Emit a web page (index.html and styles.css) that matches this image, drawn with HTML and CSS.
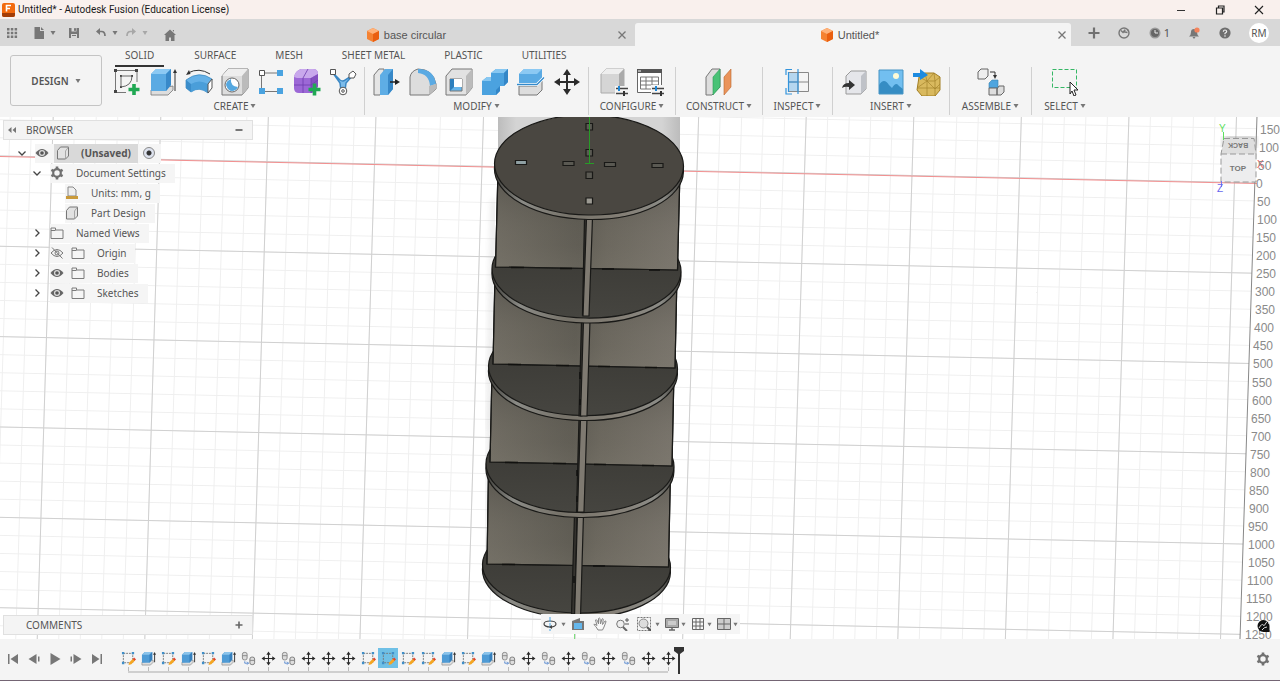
FILE: index.html
```html
<!DOCTYPE html>
<html lang="en">
<head>
<meta charset="utf-8">
<title>Untitled* - Autodesk Fusion (Education License)</title>
<link rel="stylesheet" href="styles.css">
</head>
<body>
<svg class="defs" width="0" height="0" aria-hidden="true">
  <symbol id="cube" viewBox="0 0 14 14"><path d="M7 0l6 3v8l-6 3-6-3V3z" fill="#f58232"/><path d="M7 0l6 3-6 3-6-3z" fill="#ffb27a"/><path d="M7 6l6-3v8l-6 3z" fill="#ea5f10"/></symbol>
  <symbol id="close" viewBox="0 0 12 12"><path d="M2.500 2.500l7 7M9.500 2.500l-7 7" stroke="#777" stroke-width="1.300" fill="none"/></symbol>
  <symbol id="caret" viewBox="0 0 6 6"><path d="M.5 1h5L3 5z" fill="#777"/></symbol>
  <symbol id="move" viewBox="0 0 28 28"><path d="M14 5v18M5 14h18" stroke="#2b2b2b" stroke-width="2"/><path d="M14 1l4 6h-8zM14 27l4-6h-8zM1 14l6-4v8zM27 14l-6-4v8z" fill="#2b2b2b"/></symbol>
  <symbol id="box" viewBox="0 0 14 14"><path d="M1.500 4.500l3-3.500h8v9l-3 3h-8z" fill="#e2e2e2" stroke="#777"/><path d="M9.500 13V5l3-4" fill="none" stroke="#999" stroke-width=".8"/></symbol>
  <symbol id="folder" viewBox="0 0 14 14"><path d="M1 2h4.500v2H13v8.500H1zM1 4.500h4.500" fill="none" stroke="#7b7b7b"/></symbol>
  <symbol id="eye" viewBox="0 0 14 14"><path d="M.5 7Q7-1 13.500 7 7 15 .5 7z" fill="#666"/><circle cx="7" cy="7" r="3" fill="#ddd"/><circle cx="7" cy="7" r="1.800" fill="#555"/></symbol>
  <symbol id="eyeoff" viewBox="0 0 14 14"><path d="M1 7Q7 0 13 7 7 14 1 7zM2 1.500l10.500 11" fill="none" stroke="#777"/><circle cx="7" cy="7" r="2" fill="none" stroke="#777"/></symbol>
  <symbol id="right" viewBox="0 0 14 14"><path d="M5.500 3.500L9 7l-3.500 3.500" fill="none" stroke="#444" stroke-width="1.300"/></symbol>
  <symbol id="down" viewBox="0 0 14 14"><path d="M3.500 5.500L7 9l3.500-3.500" fill="none" stroke="#444" stroke-width="1.300"/></symbol>
  <symbol id="gear" viewBox="0 0 14 14"><circle cx="7" cy="7" r="3.800" fill="none" stroke="#707070" stroke-width="2.200"/><path d="M7 .5v2.500M7 11v2.500M1.400 3.800l2 1.100M10.600 9.100l2 1.100M1.400 10.200l2-1.100M10.600 4.900l2-1.100" stroke="#707070" stroke-width="2.600"/></symbol>
  <symbol id="t-sketch" viewBox="0 0 16 16"><path d="M2.500 2.500h10v10h-10z" fill="none" stroke="#777" stroke-dasharray="2 1"/><path d="M1 1h2.500v2.500H1zM11.500 1H14v2.500h-2.500zM1 11.500h2.500V14H1z" fill="#3f8fc9"/><path d="M8 15l1-3 4-4 2 2-4 4z" fill="#f5a623"/><path d="M12.500 8.500l1.500-1.500 2 2-1.500 1.500z" fill="#e0442d"/></symbol>
  <symbol id="t-extrude" viewBox="0 0 16 16"><path d="M1 12v3h9l3-3v-2z" fill="#ddd" stroke="#888" stroke-width=".7"/><path d="M1 4l3-3h8v8l-3 3.500H1z" fill="#4f9bd5"/><path d="M1 4l3-3h8L9 4z" fill="#8bc3ea"/><path d="M9 4l3-3v8l-3 3.500z" fill="#3680bd"/><path d="M14.500 3v9" stroke="#333"/><path d="M12.800 4l1.700-3 1.500 3z" fill="#333"/></symbol>
  <symbol id="t-copy" viewBox="0 0 16 16"><rect x="1.500" y="1.500" width="5" height="8" rx="2" fill="#ddd" stroke="#888"/><rect x="9.500" y="6.500" width="5" height="8" rx="2" fill="#ddd" stroke="#777"/><path d="M1.500 5h5M9.500 10h5" stroke="#888"/><path d="M4 11v2h4M6.500 11.500L8 13l-1.500 1.500" stroke="#5a8bd0" fill="none"/></symbol>
</svg>

<header class="titlebar">
  <svg class="logo" viewBox="0 0 13 14"><rect width="13" height="14" rx="2" fill="#f2690d"/><path d="M0 10h13v2a2 2 0 0 1-2 2H2a2 2 0 0 1-2-2z" fill="#a33c05"/><path d="M4.500 8.500v-6h4.500M4.500 5.500h3.500" stroke="#fff" stroke-width="1.600" fill="none"/></svg>
  <h1 class="title">Untitled* - Autodesk Fusion (Education License)</h1>
  <div class="window-buttons">
    <button aria-label="Minimize"><svg viewBox="0 0 12 12"><path d="M2 6.500h8" stroke="#333"/></svg></button>
    <button aria-label="Restore"><svg viewBox="0 0 12 12"><path d="M2.500 4h6v6h-6zM4.500 4V2h5.500v6H8.500" fill="none" stroke="#222" stroke-width="1.200"/></svg></button>
    <button aria-label="Close"><svg viewBox="0 0 12 12"><path d="M2 2l8 8M10 2l-8 8" stroke="#222" stroke-width="1.100"/></svg></button>
  </div>
</header>

<nav class="tabbar">
  <div class="quick">
    <button class="q-grid" aria-label="Data panel"><svg viewBox="0 0 12 12"><path d="M1 1h2.500v2.500H1zM4.800 1h2.500v2.500H4.800zM8.600 1h2.500v2.500H8.600zM1 4.800h2.500v2.500H1zM4.800 4.800h2.500v2.500H4.800zM8.600 4.800h2.500v2.500H8.600zM1 8.600h2.500v2.500H1zM4.800 8.600h2.500v2.500H4.800zM8.600 8.600h2.500v2.500H8.600z" fill="#777"/></svg></button>
    <button class="q-file" aria-label="File"><svg viewBox="0 0 12 12"><path d="M1.500 0H7v4h4v8H1.500zM8 0l3 3H8z" fill="#777"/></svg><svg class="caret"><use href="#caret"/></svg></button>
    <button class="q-save" aria-label="Save"><svg viewBox="0 0 12 12"><path d="M1 1h10v10H1z" fill="#777"/><path d="M3.500 1h5v3.500h-5zM3 7h6v4H3z" fill="#d8d8d8"/><path d="M6.500 1.500h1v2h-1zM4 8.500h4" stroke="#777" fill="#777"/></svg></button>
    <button class="q-undo" aria-label="Undo"><svg viewBox="0 0 12 12"><path d="M3 4.500h3.500Q10 4.500 10 9" fill="none" stroke="#777" stroke-width="1.700"/><path d="M1 4.500L5 1v7z" fill="#777"/></svg><svg class="caret"><use href="#caret"/></svg></button>
    <button class="q-redo" aria-label="Redo"><svg viewBox="0 0 12 12"><path d="M9 4.500H5.500Q2 4.500 2 9" fill="none" stroke="#777" stroke-width="1.700"/><path d="M11 4.500L7 1v7z" fill="#777"/></svg><svg class="caret"><use href="#caret"/></svg></button>
    <button class="q-home" aria-label="Home"><svg viewBox="0 0 12 12"><path d="M6 .5l6 5.500h-1.500v6H7V8.500H5V12H1.500V6H0zM8.500 1H10v2z" fill="#777"/></svg></button>
  </div>
  <div class="tab tab-first">
    <span class="tab-title"><svg class="i14"><use href="#cube"/></svg>base circular</span>
    <button class="tab-close" aria-label="Close base circular"><svg class="i12"><use href="#close"/></svg></button>
  </div>
  <div class="tab tab-active">
    <span class="tab-title"><svg class="i14"><use href="#cube"/></svg>Untitled*</span>
    <button class="tab-close" aria-label="Close Untitled"><svg class="i12"><use href="#close"/></svg></button>
  </div>
  <div class="account">
    <button aria-label="New design"><svg viewBox="0 0 12 12"><path d="M6 .5v11M.5 6h11" stroke="#707070" stroke-width="2.200"/></svg></button>
    <button aria-label="Extensions"><svg viewBox="0 0 12 12"><circle cx="6" cy="6" r="5" fill="none" stroke="#777" stroke-width="1.400"/><path d="M3 3.500l2 2 1.500-2M7 2.500L6.500 5l3 .5M9 2.500l1.500 1" stroke="#777" stroke-width="1.400" fill="none"/></svg></button>
    <button class="jobs" aria-label="Job status"><svg viewBox="0 0 12 12"><circle cx="6" cy="6" r="5.500" fill="#999"/><circle cx="6" cy="6" r="4" fill="#666"/><path d="M6 3v3h3" stroke="#eee" fill="none"/></svg>1</button>
    <button aria-label="Notifications"><svg viewBox="0 0 12 12"><path d="M1 9.500Q3 8 3 5t3-3 3 3 2 4.500zM4.500 10h3L6 12z" fill="#777"/><circle cx="9" cy="3" r="2.600" fill="#f5835b"/></svg></button>
    <button aria-label="Help"><svg viewBox="0 0 12 12"><circle cx="6" cy="6" r="5.600" fill="#6e6e6e"/><path d="M4.300 4.700Q4.500 3 6 3t1.700 1.500Q7.700 5.500 6 6.300v.9" stroke="#eee" stroke-width="1.200" fill="none"/><circle cx="6" cy="9" r=".8" fill="#eee"/></svg></button>
    <button class="avatar">RM</button>
  </div>
</nav>

<section class="ribbon">
  <button class="workspace">DESIGN <svg class="caret"><use href="#caret"/></svg></button>
  <div class="ribbon-main">
    <div class="ribbon-tabs">
      <button class="current">SOLID</button><button>SURFACE</button><button>MESH</button><button>SHEET METAL</button><button>PLASTIC</button><button>UTILITIES</button>
    </div>
    <div class="groups">
      <div class="group group-create">
        <div class="tools">
          <button aria-label="Create sketch"><svg viewBox="0 0 28 28"><path d="M2 2.500h22M2.500 2v22M24 2v12M2 24.500h11" stroke="#777" fill="none"/><path d="M1 1h3v3H1zM22 1h3v3h-3zM1 22h3v3H1zM7 7h2v2H7zM7 18h2v2H7zM18 7h2v2h-2z" fill="#444"/><path d="M8 8h11Q19 18 8 19z" fill="none" stroke="#666"/><path d="M21 16v11M15.500 21.500h11" stroke="#20a853" stroke-width="3.600"/></svg></button>
          <button aria-label="Extrude"><svg viewBox="0 0 28 28"><path d="M2 22v5h17l5-5v-4z" fill="#ddd" stroke="#777" stroke-width=".8"/><path d="M2 6l5-5h15v16l-5 6H2z" fill="#5aaae3"/><path d="M2 6l5-5h15l-5 5z" fill="#8cc9f3"/><path d="M17 6l5-5v16l-5 6z" fill="#3889c9"/><path d="M26 3v20" stroke="#333"/><path d="M24 5l2-4 2 4z" fill="#333"/></svg></button>
          <button aria-label="Revolve"><svg viewBox="0 0 28 28"><path d="M1 12Q14 2 27 11l-4 14Q14 18 6 24L1 20z" fill="#65b1e7" stroke="#3785bd" stroke-width=".7"/><path d="M1 12l5 4v8l-5-4z" fill="#3b8dca"/><path d="M6 16Q14 11 23 16v9Q14 18 6 24z" fill="#4a9ed9"/><path d="M23 16l4-5v9l-4 5z" fill="#fff" stroke="#555"/><path d="M3 5Q14-1 25 6" fill="none" stroke="#333"/><path d="M1 7l3-5 1.500 4z" fill="#333"/></svg></button>
          <button aria-label="Hole"><svg viewBox="0 0 28 28"><path d="M1 8l6-7h20v19l-6 7H1z" fill="#ddd" stroke="#777"/><path d="M1 8l6-7h20l-6 7z" fill="#eee"/><path d="M21 8l6-7v19l-6 7z" fill="#bbb"/><circle cx="11" cy="17" r="7" fill="#fff" stroke="#666"/><path d="M10 11Q9 18 17 19 15 23 11 23T5 17q0-4 5-6z" fill="#55a8e0"/></svg></button>
          <button aria-label="Pattern"><svg viewBox="0 0 28 28"><path d="M5 5h19M4.500 6v17M4 23.500h20" stroke="#777"/><path d="M2.500 2.500h5v5h-5z" fill="#fff" stroke="#555"/><path d="M20 2h6v6h-6zM2 20h6v6H2zM20 20h6v6h-6z" fill="#4aa3e0"/></svg></button>
          <button aria-label="Create form"><svg viewBox="0 0 28 28"><path d="M1 9q1-6 7-8h12q5 0 5 5v12q-2 6-7 7H6q-5 0-5-5z" fill="#9c68d6"/><path d="M1 9q1-6 7-8h12q5 0 5 5l-7 4H4z" fill="#c8a8ec"/><path d="M18 10l7-4v12q-2 6-7 7z" fill="#8450c0"/><path d="M1 17h17l7-5M10 25V10l5-9M18 25V10" stroke="#6f3eae" stroke-width=".8" fill="none"/><path d="M21.500 15.500v12M15.500 21.500h12" stroke="#20a853" stroke-width="3.600"/></svg></button>
          <button aria-label="Automated modeling"><svg viewBox="0 0 28 28"><path d="M4 5l7 7q3 2 5 0l8-5-7 8-1 8h-4l-1-8z" fill="#7dbcea" stroke="#3a87c4" stroke-width="1.500"/><path d="M1.500 1.500h5v5h-5z" fill="#fff" stroke="#555"/><path d="M20 6l4-3 3 3-2 4h-5z" fill="#fff" stroke="#555"/><circle cx="14" cy="23" r="3.800" fill="#fff" stroke="#555"/><circle cx="14" cy="23" r="1.300" fill="none" stroke="#555"/></svg></button>
        </div>
        <button class="group-label">CREATE<svg class="caret"><use href="#caret"/></svg></button>
      </div>
      <div class="group">
        <div class="tools">
          <button aria-label="Press pull"><svg viewBox="0 0 28 28"><path d="M1 7l5-6h5v20l-4 6H1z" fill="#e5e5e5" stroke="#777"/><path d="M7 7l5-6h8v20l-5 6H7z" fill="#5eade5"/><path d="M15 7l5-6v20l-5 6z" fill="#3788c8"/><path d="M17 14h7" stroke="#222" stroke-width="1.500"/><path d="M22 11l5 3-5 3z" fill="#222"/></svg></button>
          <button aria-label="Fillet"><svg viewBox="0 0 28 28"><path d="M1 9q1-6 8-8 15 0 18 15v5l-7 6H1z" fill="#ddd" stroke="#777"/><path d="M9 1q16 0 18 15l-6 2Q20 6 9 5z" fill="#5aaae3"/><path d="M20 18l7-2v5l-7 6z" fill="#bbb"/></svg></button>
          <button aria-label="Shell"><svg viewBox="0 0 28 28"><path d="M1 8l6-7h20v19l-6 7H1z" fill="#e2e2e2" stroke="#777"/><path d="M21 8l6-7v19l-6 7z" fill="#bbb"/><path d="M5 11h12v12H5z" fill="#67b5ea" stroke="#777"/><path d="M5 11h4v8l-4 4z" fill="#2d7fbd"/><path d="M9 11h8v8H9z" fill="#fff"/></svg></button>
          <button aria-label="Combine"><svg viewBox="0 0 28 28"><path d="M1 13l5-4h4V5l5-4h12v13l-4 4h-4v5l-4 4H1z" fill="#4ba2df"/><path d="M10 5l5-4h12l-4 4zM1 13l5-4h4v4z" fill="#87c7f1"/><path d="M23 5l4-4v13l-4 4zM15 22l4-4v5l-4 4z" fill="#3386c7"/></svg></button>
          <button aria-label="Split body"><svg viewBox="0 0 28 28"><path d="M2 6l5-5h18v10l-5 4H2z" fill="#5aaae3"/><path d="M2 6l5-5h18l-5 5z" fill="#8cc9f3"/><path d="M2 18h18l5-5v9l-5 5H2z" fill="#ddd" stroke="#777"/><path d="M0 16.500h20l7-7" stroke="#fff" stroke-width="3" fill="none"/><path d="M0 16.500h20l7-7" stroke="#348acb" stroke-width="1.300" fill="none"/></svg></button>
          <button aria-label="Move"><svg><use href="#move"/></svg></button>
        </div>
        <button class="group-label">MODIFY<svg class="caret"><use href="#caret"/></svg></button>
      </div>
      <div class="group">
        <div class="tools">
          <button aria-label="Configure design"><svg viewBox="0 0 28 28"><path d="M1 6l5-5h18v19l-5 5H1z" fill="#d5d5d5" stroke="#aaa"/><path d="M1 6l5-5h18l-5 5z" fill="#eee"/><path d="M19 6l5-5v18l-5 6z" fill="#aaa"/><path d="M15 18h13v10H15z" fill="#f4f4f4"/><path d="M16 20.500h12M16 25.500h12" stroke="#444" stroke-width="1.500"/><path d="M19 18v5" stroke="#1e88d8" stroke-width="2"/><path d="M24 23v5" stroke="#333" stroke-width="2"/></svg></button>
          <button aria-label="Configuration table"><svg viewBox="0 0 28 28"><path d="M1.500 1.500h24v23h-24z" fill="#fff" stroke="#666"/><path d="M1 1h25v4H1z" fill="#555"/><path d="M2 3h3" stroke="#fff"/><path d="M4.500 9h18v12h-18zM4 13h18M4 17h18M10 9v12M16 9v12" fill="none" stroke="#777"/><path d="M15 17h12v10H15z" fill="#f5f5f5"/><path d="M16 20.500h12M16 25.500h12" stroke="#444" stroke-width="1.500"/><path d="M20 18v5" stroke="#1e88d8" stroke-width="2"/><path d="M25 23v5" stroke="#333" stroke-width="2"/></svg></button>
        </div>
        <button class="group-label">CONFIGURE<svg class="caret"><use href="#caret"/></svg></button>
      </div>
      <div class="group">
        <div class="tools">
          <button aria-label="Offset plane"><svg viewBox="0 0 28 28"><path d="M1 9l6-8h8v18l-8 8H1z" fill="#ddd" stroke="#777"/><path d="M8 9l7-8v18l-7 8z" fill="#49c276" stroke="#2e9a57" stroke-width=".6"/><path d="M19 9l7-8v18l-7 8z" fill="#ea945b" stroke="#b8652d" stroke-width=".6"/></svg></button>
        </div>
        <button class="group-label">CONSTRUCT<svg class="caret"><use href="#caret"/></svg></button>
      </div>
      <div class="group">
        <div class="tools">
          <button aria-label="Measure"><svg viewBox="0 0 28 28"><path d="M4 4h10v19H4z" fill="#b5d6ef"/><path d="M4.500 4.500h20v19h-20zM4 14h20M14 4v20" fill="none" stroke="#888"/><path d="M2 7V1.500h6M2 20v6h6M14 1v25M4.500 4v20M4 14h10" fill="none" stroke="#3394dc" stroke-width="1.200"/></svg></button>
        </div>
        <button class="group-label">INSPECT<svg class="caret"><use href="#caret"/></svg></button>
      </div>
      <div class="group">
        <div class="tools">
          <button aria-label="Insert derive"><svg viewBox="0 0 28 28"><path d="M5 8l5-5h15v18l-5 5H5z" fill="#e5e6ea" stroke="#999"/><path d="M20 8l5-5v18l-5 5z" fill="#bfc2c8"/><path d="M1 20q1-5 7-5v-3l6 5-6 5v-3q-4-1-7 1z" fill="#333"/></svg></button>
          <button aria-label="Insert image"><svg viewBox="0 0 28 28"><path d="M2 2h24v24H2z" fill="#72bff0"/><path d="M2 17q5-8 10 0l3 3q4-7 7-2l4 3v5H2z" fill="#368dc4"/><circle cx="19" cy="8" r="3" fill="#fffbd6"/><path d="M2 2h24v24H2z" fill="none" stroke="#4794c4"/></svg></button>
          <button aria-label="Insert mesh"><svg viewBox="0 0 28 28"><path d="M6 9l6-4h9l6 4v13l-5 6H9l-5-6z" fill="#d9b95e" stroke="#a27e22"/><path d="M6 9l8 4h8l5-4M14 13v15M4 20l10-7 8 8 5-5M22 13v15M4 20h23M12 5l2 8 7-8 1 8" fill="none" stroke="#a5842c" stroke-width=".7"/><path d="M0 5h7V1l8 6-8 5V9H0z" fill="#1d8be0"/></svg></button>
        </div>
        <button class="group-label">INSERT<svg class="caret"><use href="#caret"/></svg></button>
      </div>
      <div class="group">
        <div class="tools">
          <button aria-label="New component"><svg viewBox="0 0 28 28"><path d="M1 4l3-3h7v7l-3 3H1z" fill="#eee" stroke="#666"/><path d="M13 4h5v4" fill="none" stroke="#333"/><path d="M16 7h4l-2 4z" fill="#333"/><path d="M12 15l3-3h6v8h-9z" fill="#4fa5df" stroke="#377fae" stroke-width=".6"/><path d="M12 20h8v7h-8zM20 21l2-3h5v6l-3 3h-4z" fill="#ddd" stroke="#666"/></svg></button>
        </div>
        <button class="group-label">ASSEMBLE<svg class="caret"><use href="#caret"/></svg></button>
      </div>
      <div class="group group-last">
        <div class="tools">
          <button aria-label="Select"><svg viewBox="0 0 28 28"><path d="M1.500 1.500h24v18h-24z" fill="none" stroke="#35b765" stroke-dasharray="4 2"/><path d="M19 14l8 8h-4l2 5-2 1-2-5-2 3z" fill="#fff" stroke="#222"/></svg></button>
        </div>
        <button class="group-label">SELECT<svg class="caret"><use href="#caret"/></svg></button>
      </div>
    </div>
  </div>
</section>

<main class="viewport">
  <svg class="scene" viewBox="0 117 1280 522" preserveAspectRatio="xMidYMid slice">
    <defs>
      <pattern id="minor" width="21.500" height="18.060" patternUnits="userSpaceOnUse" patternTransform="matrix(1 .0215 -.0306 1 51.500 156.500)"><path d="M0 .5h21.500M.5 0v18.060" stroke="#efefef"/></pattern>
      <pattern id="major" width="107.500" height="90.300" patternUnits="userSpaceOnUse" patternTransform="matrix(1 .0215 -.0306 1 51.500 156.500)"><path d="M0 .5h107.500M.5 0v90.300" stroke="#d0d0d0"/></pattern>
      <linearGradient id="wallL"><stop offset="0" stop-color="#6d6960"/><stop offset=".45" stop-color="#5a574f"/><stop offset=".6" stop-color="#67635a"/><stop offset="1" stop-color="#77726a"/></linearGradient>
      <linearGradient id="shade" x2="0" y2="1"><stop offset="0" stop-color="#33322e" stop-opacity=".4"/><stop offset=".75" stop-color="#888478" stop-opacity=".15"/><stop offset="1" stop-color="#888478" stop-opacity=".3"/></linearGradient>
      <linearGradient id="rim"><stop offset="0" stop-color="#42413d"/><stop offset=".15" stop-color="#8b8b86"/><stop offset=".4" stop-color="#77736a"/><stop offset=".7" stop-color="#858077"/><stop offset=".9" stop-color="#8b8b86"/><stop offset="1" stop-color="#42413d"/></linearGradient>
      <linearGradient id="disc" x2="0" y2="1"><stop offset="0" stop-color="#373632"/><stop offset="1" stop-color="#464540"/></linearGradient>
      <linearGradient id="backdrop"><stop offset="0" stop-color="#bcbcbc"/><stop offset=".1" stop-color="#d4d4d4"/><stop offset=".9" stop-color="#d4d4d4"/><stop offset="1" stop-color="#bcbcbc"/></linearGradient>
      <filter id="soft"><feGaussianBlur stdDeviation="3"/></filter>
    </defs>
    <path d="M0 116h1257l-17 523H0z" fill="url(#minor)"/>
    <path d="M0 116h1257l-17 523H0z" fill="url(#major)"/>
    <path d="M0 156.500L1257 183.500" stroke="#f29090"/>
    <path d="M1257 116l-17 523" stroke="#888"/>
    <path d="M574.500 632v7" stroke="#7ee07e"/>
    <path d="M498 116h182v60H498z" fill="url(#backdrop)"/>
    <path d="M494 200l-5 230M491 400l-5 180" stroke="#999" stroke-width="4" opacity=".3" filter="url(#soft)"/>

    <g stroke="#191917" stroke-width="1.200">
      <g transform="rotate(1 576.500 566)"><ellipse cx="576.500" cy="571" rx="94" ry="47" fill="url(#rim)"/><ellipse cx="576.500" cy="566" rx="94" ry="47" fill="url(#disc)"/></g>
      <path d="M488.500 470L487 564l181.500 3 2-97z" fill="url(#wallL)"/><path d="M488.500 470L487 564l181.500 3 2-97z" fill="url(#shade)"/>
      <path d="M574.500 514l-3 100h3.500l2-100z" fill="#35332f"/><path d="M577.500 514l-3 103h6l3-103z" fill="#7f7a71"/>

      <g transform="rotate(1 580 465)"><ellipse cx="580" cy="470" rx="94" ry="47.500" fill="url(#rim)"/><ellipse cx="580" cy="465" rx="94" ry="47.500" fill="url(#disc)"/></g>
      <path d="M492 372l-2 90 182 4 2-94z" fill="url(#wallL)"/><path d="M492 372l-2 90 182 4 2-94z" fill="url(#shade)"/>
      <path d="M579 418l-2.500 94h3l2-94z" fill="#35332f"/><path d="M580.500 418l-3 94h6.500l3-94z" fill="#7f7a71"/>

      <g transform="rotate(1 583 368)"><ellipse cx="583" cy="372.500" rx="94.500" ry="48" fill="url(#rim)"/><ellipse cx="583" cy="367.500" rx="94.500" ry="48" fill="url(#disc)"/></g>
      <path d="M495 275l-2 89 182 4 2-93z" fill="url(#wallL)"/><path d="M495 275l-2 89 182 4 2-93z" fill="url(#shade)"/>
      <path d="M581.500 320l-2.500 96h3l2-96z" fill="#35332f"/><path d="M583.500 320l-3 96h6.500l3-96z" fill="#7f7a71"/>

      <g transform="rotate(1 586.500 271)"><ellipse cx="586.500" cy="275" rx="94.500" ry="48" fill="url(#rim)"/><ellipse cx="586.500" cy="270" rx="94.500" ry="48" fill="url(#disc)"/></g>
      <path d="M498 170l-2.500 97 182 3 2.500-100z" fill="url(#wallL)"/><path d="M498 170l-2.500 97 182 3 2.500-100z" fill="url(#shade)"/>
      <path d="M584.500 218l-2 97h3l2-97z" fill="#35332f"/><path d="M586.500 218l-3.500 98h6l3.500-98z" fill="#7f7a71"/>

      <g transform="rotate(1 589 166)"><ellipse cx="589" cy="170" rx="94.500" ry="49.500" fill="url(#rim)"/><ellipse cx="589" cy="165" rx="94.500" ry="50" fill="#4a4741"/></g>
      <path d="M586 123.500h6.500v6.500H586zM586 149.500h6.500v6.500H586zM586 172h6.500v6.500H586zM563 161.500h11v4h-11zM604.500 162.500h11v4h-11zM652 163.500h11v4h-11z" fill="#5a5952"/>
      <path d="M586 198h6.500v6H586z" fill="#9c9a92"/><path d="M515.500 160.500h11v4h-11z" fill="#8fa0a3"/>
    </g>
    <path d="M511 267.500h13M560 268.500h12M602 269h12M649 270h11M508 364.500h13M556 365.500h13M598 366.500h12M645 367.500h12M505 462.500h13M553 463.500h13M594 464.500h12M642 465.500h12M502 564.500h13M593 566h12M580 372v7M580 399v6M577 470v6M577 496v6M574 576v7" stroke="#11110f" stroke-width="1.500"/>
    <path d="M589.500 116v47M585 163.500h9" stroke="#279c27"/>

    <path d="M1224 137h31v10h-31z" fill="#777" opacity=".6" filter="url(#soft)"/>
    <path d="M1224 138h30l2 16h-35z" fill="#dedede"/><path d="M1221 154h35v28h-35z" fill="#ededee"/>
    <path d="M1224 138.500h30l2 15.500v28h-35v-28zM1221 154h35" fill="none" stroke="#999" stroke-dasharray="6 3"/>
    <text class="face" x="1238" y="171">TOP</text>
    <text class="face face-back" transform="rotate(180 1238 145)" x="1238" y="147">BACK</text>
    <path d="M1223.500 132v8" stroke="#5ee05e"/><path d="M1221.500 181v6" stroke="#7777ef"/>
    <text class="axis axis-y" x="1219" y="132">Y</text><text class="axis axis-z" x="1217" y="192">Z</text><text class="axis axis-x" x="1257" y="168">X</text>
    <g class="ruler">
      <text x="1260" y="134">150</text><text x="1259" y="152">100</text><text x="1258" y="170">50</text><text x="1256" y="188">0</text><text x="1257" y="206">50</text><text x="1257" y="224">100</text><text x="1256" y="242">150</text><text x="1256" y="260">200</text><text x="1256" y="278">250</text><text x="1255" y="296">300</text><text x="1255" y="314">350</text><text x="1254" y="332">400</text><text x="1253" y="350">450</text><text x="1253" y="368">500</text><text x="1252" y="387">550</text><text x="1252" y="405">600</text><text x="1251" y="423">650</text><text x="1251" y="441">700</text><text x="1250" y="459">750</text><text x="1250" y="477">800</text><text x="1249" y="495">850</text><text x="1249" y="513">900</text><text x="1248" y="531">950</text><text x="1248" y="549">1000</text><text x="1248" y="567">1050</text><text x="1247" y="585">1100</text><text x="1246" y="603">1150</text><text x="1246" y="621">1200</text><text x="1245" y="639">1250</text>
    </g>
    <path d="M1257.500 626a6 6 0 0 1 12 0v6h-6a6 6 0 0 1-6-6z" fill="#111"/><path d="M1259 628q3-5 4-3t3-2 3 1M1262 630q2-3 5-3" stroke="#ddd" fill="none"/>
  </svg>

  <aside class="browser">
    <div class="panel-head"><button aria-label="Collapse panel"><svg class="i12" viewBox="0 0 12 12"><path d="M5.500 3v6L2 6zM10 3v6L6.500 6z" fill="#777"/></svg></button><h2>BROWSER</h2><button aria-label="Minimize panel"><svg class="i12" viewBox="0 0 12 12"><path d="M2.500 6h7" stroke="#777" stroke-width="2"/></svg></button></div>
    <ul class="tree">
      <li class="row level0"><svg class="i14"><use href="#down"/></svg><span class="item root"><svg class="i14"><use href="#eye"/></svg><span class="selected"><svg class="i14"><use href="#box"/></svg><b>(Unsaved)</b></span><input type="radio" checked aria-label="Activate component"></span></li>
      <li class="row level1"><svg class="i14"><use href="#down"/></svg><span class="item"><svg class="i14"><use href="#gear"/></svg><span>Document Settings</span></span></li>
      <li class="row level2"><span class="item"><svg class="i14" viewBox="0 0 14 14"><path d="M3 1h5l3 3v6H3z" fill="#eee" stroke="#888"/><path d="M1 10h12v3H1z" fill="#c99a3b"/></svg><span>Units: mm, g</span></span></li>
      <li class="row level2"><span class="item"><svg class="i14"><use href="#box"/></svg><span>Part Design</span></span></li>
      <li class="row level1"><svg class="i14"><use href="#right"/></svg><span class="item"><svg class="i14"><use href="#folder"/></svg><span>Named Views</span></span></li>
      <li class="row level1"><svg class="i14"><use href="#right"/></svg><span class="item"><svg class="i14 vis"><use href="#eyeoff"/></svg><svg class="i14"><use href="#folder"/></svg><span>Origin</span></span></li>
      <li class="row level1"><svg class="i14"><use href="#right"/></svg><span class="item"><svg class="i14 vis"><use href="#eye"/></svg><svg class="i14"><use href="#folder"/></svg><span>Bodies</span></span></li>
      <li class="row level1"><svg class="i14"><use href="#right"/></svg><span class="item"><svg class="i14 vis"><use href="#eye"/></svg><svg class="i14"><use href="#folder"/></svg><span>Sketches</span></span></li>
    </ul>
  </aside>

  <section class="comments panel-head"><h2>COMMENTS</h2><button aria-label="Expand comments"><svg class="i12" viewBox="0 0 12 12"><path d="M6 2.500v7M2.500 6h7" stroke="#666" stroke-width="1.600"/></svg></button></section>

  <div class="navbar">
    <button aria-label="Orbit"><svg viewBox="0 0 14 14"><ellipse cx="7" cy="7" rx="6" ry="3" fill="none" stroke="#444" stroke-width="1.200"/><path d="M7 0v14" stroke="#4aa3e0" stroke-dasharray="5 1"/><path d="M9 8l-3 2 3 2z" fill="#444"/></svg></button><svg class="caret gap"><use href="#caret"/></svg>
    <button aria-label="Look at"><svg viewBox="0 0 14 14"><path d="M1 4l8-3v3h4v9H1z" fill="#777"/><path d="M3 6h8v6H3z" fill="#65b7ec"/></svg></button>
    <button class="wide" aria-label="Pan"><svg viewBox="0 0 14 14"><path d="M5 13Q3 9 .8 7.500q1-1 3.200 1L2.500 3q1-1 2 1l1 3V1.500q1-1 1.500 0L7.500 7l1.500-5q1-.8 1.300.3L9.500 7.500 12 4q1.500-.3.900 1L11 10l-1.500 3z" fill="#f8f8f8" stroke="#888"/></svg></button>
    <button class="wide" aria-label="Zoom"><svg viewBox="0 0 14 14"><circle cx="5.500" cy="7" r="3.800" fill="#eee" stroke="#777"/><path d="M8 10l4 4" stroke="#666" stroke-width="2"/><path d="M10 3h4M12 1v4M10 7h4" stroke="#555"/></svg></button>
    <button class="wide" aria-label="Fit"><svg viewBox="0 0 14 14"><path d="M.5.500h13v13H.5z" fill="none" stroke="#777" stroke-dasharray="2 1"/><circle cx="6.500" cy="6.500" r="4.500" fill="#ddd" stroke="#888"/><path d="M10 10l4 4" stroke="#555" stroke-width="2"/></svg></button><svg class="caret gap"><use href="#caret"/></svg>
    <button aria-label="Display settings"><svg viewBox="0 0 14 14"><path d="M.5 1.500h13v9H.5z" fill="#aaa" stroke="#666"/><path d="M3 4h8v4H3z" fill="#ccc"/><path d="M4 13h6M7 10v3" stroke="#666" stroke-width="1.500"/></svg></button><svg class="caret"><use href="#caret"/></svg>
    <button aria-label="Grid settings"><svg viewBox="0 0 14 14"><path d="M1.500 1.500h11v11h-11zM1.500 5h11M1.500 9h11M5 1.500v11M9 1.500v11" fill="none" stroke="#666"/></svg></button><svg class="caret"><use href="#caret"/></svg>
    <button aria-label="Viewports"><svg viewBox="0 0 14 14"><path d="M.5 1.500h13v11H.5z" fill="#ccc" stroke="#666"/><path d="M7 1.500v11M.5 7h13" stroke="#666"/></svg></button><svg class="caret"><use href="#caret"/></svg>
  </div>
</main>

<footer class="timeline">
  <div class="playback">
    <button aria-label="Go to start"><svg viewBox="0 0 12 12"><path d="M1 1h1.500v10H1zM11 1v10L3.500 6z" fill="#777"/></svg></button>
    <button aria-label="Step back"><svg viewBox="0 0 12 12"><path d="M8.500 1v10L.5 6zM10 3.500h1.500v5H10z" fill="#777"/></svg></button>
    <button aria-label="Play"><svg viewBox="0 0 12 12"><path d="M1.500 0v12L11.500 6z" fill="#777"/></svg></button>
    <button aria-label="Step forward"><svg viewBox="0 0 12 12"><path d="M3.500 1v10l8-5zM.5 3.500H2v5H.5z" fill="#777"/></svg></button>
    <button aria-label="Go to end"><svg viewBox="0 0 12 12"><path d="M9.500 1H11v10H9.500zM1 1v10l7.500-5z" fill="#777"/></svg></button>
  </div>
  <div class="features">
    <button aria-label="Sketch"><svg><use href="#t-sketch"/></svg></button>
    <button aria-label="Extrude"><svg><use href="#t-extrude"/></svg></button>
    <button aria-label="Sketch"><svg><use href="#t-sketch"/></svg></button>
    <button aria-label="Extrude"><svg><use href="#t-extrude"/></svg></button>
    <button aria-label="Sketch"><svg><use href="#t-sketch"/></svg></button>
    <button aria-label="Extrude"><svg><use href="#t-extrude"/></svg></button>
    <button aria-label="Copy"><svg><use href="#t-copy"/></svg></button>
    <button aria-label="Move"><svg><use href="#move"/></svg></button>
    <button aria-label="Copy"><svg><use href="#t-copy"/></svg></button>
    <button aria-label="Move"><svg><use href="#move"/></svg></button>
    <button aria-label="Move"><svg><use href="#move"/></svg></button>
    <button aria-label="Move"><svg><use href="#move"/></svg></button>
    <button aria-label="Sketch"><svg><use href="#t-sketch"/></svg></button>
    <button class="picked" aria-label="Sketch"><svg><use href="#t-sketch"/></svg></button>
    <button aria-label="Sketch"><svg><use href="#t-sketch"/></svg></button>
    <button aria-label="Sketch"><svg><use href="#t-sketch"/></svg></button>
    <button aria-label="Extrude"><svg><use href="#t-extrude"/></svg></button>
    <button aria-label="Sketch"><svg><use href="#t-sketch"/></svg></button>
    <button aria-label="Extrude"><svg><use href="#t-extrude"/></svg></button>
    <button aria-label="Copy"><svg><use href="#t-copy"/></svg></button>
    <button aria-label="Move"><svg><use href="#move"/></svg></button>
    <button aria-label="Copy"><svg><use href="#t-copy"/></svg></button>
    <button aria-label="Move"><svg><use href="#move"/></svg></button>
    <button aria-label="Copy"><svg><use href="#t-copy"/></svg></button>
    <button aria-label="Move"><svg><use href="#move"/></svg></button>
    <button aria-label="Copy"><svg><use href="#t-copy"/></svg></button>
    <button aria-label="Move"><svg><use href="#move"/></svg></button>
    <button aria-label="Move"><svg><use href="#move"/></svg></button>
    <svg class="marker" viewBox="0 0 10 28"><path d="M0 1h10v4L6 8v20H4V8L0 5z" fill="#333"/></svg>
  </div>
  <button class="settings" aria-label="Timeline settings"><svg class="i14"><use href="#gear"/></svg></button>
</footer>
</body>
</html>
```
FILE: styles.css
```css
* { box-sizing: border-box; }
body {
  margin: 0;
  min-height: 100vh;
  display: flex;
  flex-direction: column;
  font: 11px/16px "Noto Sans", "Open Sans", sans-serif;
  color: #555;
  background: #f4f4f4;
  overflow: hidden;
}
button {
  margin: 0;
  padding: 0;
  border: 0;
  background: none;
  font: inherit;
  color: inherit;
  display: flex;
  align-items: center;
  justify-content: center;
}
svg { display: block; flex: none; }
h1, h2 { margin: 0; font-size: inherit; font-weight: 400; }
.defs { position: absolute; }
.i12 { width: 12px; height: 12px; }
.i14 { width: 14px; height: 14px; }
.caret { width: 6px; height: 6px; }

.titlebar {
  height: 19px;
  display: flex;
  align-items: center;
  background: #f9f0ed;
  padding-left: 2px;
}
.logo { width: 13px; height: 14px; }
.title { flex: 1; margin-left: 3px; font-family: Roboto, sans-serif; font-size: 10px; color: #1a1a1a; }
.window-buttons { display: flex; padding-right: 2px; }
.window-buttons button { width: 39px; }
.window-buttons svg { width: 12px; height: 12px; }

.tabbar { height: 27px; display: flex; background: #d8d8d8; }
.quick { width: 188px; display: flex; align-items: center; padding-left: 6px; }
.quick svg { width: 12px; height: 12px; }
.quick .caret { width: 6px; height: 6px; margin-left: 5px; }
.q-grid, .q-save { margin-right: 15px; }
.q-file { margin-right: 12px; }
.q-undo { margin-right: 7px; }
.q-redo { opacity: .5; margin-right: 16px; }
.q-home { padding-top: 5px; }
.tab { flex: 438; display: flex; align-items: center; font-family: "Liberation Sans", sans-serif; padding: 4px 7px 0 0; }
.tab-first { flex: 445; }
.tab-active { background: #f4f4f4; margin-top: 4px; padding: 0 3px 0 0; border-radius: 3px 3px 0 0; }
.tab-title { flex: 1; display: flex; align-items: center; justify-content: center; gap: 4px; padding-left: 8px; }
.account { width: 209px; display: flex; align-items: center; justify-content: space-between; padding: 0 11px 0 17px; }
.account svg { width: 12px; height: 12px; }
.jobs { gap: 3px; }
.avatar { width: 20px; height: 20px; border-radius: 50%; background: #fff; font-size: 10px; }

.ribbon { display: flex; height: 71px; background: #f4f4f4; font-size: 10px; }
.workspace {
  width: 92px;
  margin: 9px 8px 11px 10px;
  border: 1px solid #c4c4c4;
  border-radius: 3px;
  gap: 6px;
  font-weight: 600;
}
.ribbon-main { flex: 1; }
.ribbon-tabs { display: flex; gap: 29px; padding-left: 5px; }
.ribbon-tabs button { height: 21px; padding: 0 5px 1px; border-bottom: 2px solid transparent; }
.ribbon-tabs .current { padding: 0 10px 1px; border-color: #333; margin-right: -4px; }
.groups { display: grid; grid-template-columns: 255px 224px 87px 87px 70px 117px 82px 66px; height: 43px; }
.group { border-right: 1px solid #d0d0d0; display: flex; flex-direction: column; align-items: center; }
.group-create { padding-right: 4px; }
.group-last { border: 0; }
.tools { display: flex; }
.tools button { width: 36px; height: 30px; }
.tools svg { width: 28px; height: 28px; }
.group-label { height: 18px; gap: 2px; white-space: nowrap; }

.viewport { position: relative; flex: 1; background: #fff; overflow: hidden; }
.scene { position: absolute; width: 100%; height: 100%; }
.ruler { font: 12px "Liberation Sans", sans-serif; fill: #8a8a8a; }
.face { font: 700 8px "Liberation Sans", sans-serif; fill: #777; text-anchor: middle; }
.face-back { font-size: 7px; }
.axis { font: 10px "Liberation Sans", sans-serif; }
.axis-x { fill: #e55; }
.axis-y { fill: #5ee05e; }
.axis-z { fill: #66e; }

.browser { position: absolute; left: 3px; top: 3px; width: 250px; }
.panel-head {
  height: 20px;
  display: flex;
  align-items: center;
  padding: 0 7px 0 2px;
  background: #f4f4f4;
  border: 1px solid #e0e0e0;
  font-size: 10px;
}
.panel-head h2 { flex: 1; margin-left: 8px; }
.comments { position: absolute; left: 3px; bottom: 4px; width: 250px; padding-left: 14px; }
.tree { list-style: none; margin: 3px 0 0; padding: 0; font-size: 10px; }
.row { height: 20px; display: flex; align-items: center; gap: 6px; }
.level0 { padding-left: 12px; }
.level1 { padding-left: 27px; }
.level2 { padding-left: 62px; }
.item { height: 19px; display: flex; align-items: center; gap: 12px; padding-right: 9px; background: #f5f5f5; }
.vis { margin-right: -5px; }
.root { gap: 5px; padding-right: 6px; }
.selected { height: 19px; display: flex; align-items: center; gap: 11px; padding: 0 7px 0 2px; background: #d9d9d9; }
.root input {
  appearance: none;
  width: 12px;
  height: 12px;
  margin: 0;
  border: 1px solid #888;
  border-radius: 50%;
  background: radial-gradient(#333 0 2px, #dde2ee 3px);
}
.navbar {
  position: absolute;
  left: 50%;
  bottom: 5px;
  height: 20px;
  margin-left: -99px;
  display: flex;
  align-items: center;
  padding: 0 2px;
  background: #f5f5f5;
}
.navbar svg { width: 14px; height: 14px; }
.navbar button + button, .navbar .caret + button { margin-left: 5px; }
.navbar button + .wide { margin-left: 8px; }
.navbar .caret { width: 5px; height: 5px; margin-left: 2px; }
.navbar .gap { margin-left: 4px; }

.timeline {
  height: 42px;
  display: flex;
  align-items: flex-start;
  background: #f4f4f4;
  border-bottom: 1px solid #746574;
}
.playback { width: 118px; height: 40px; display: flex; justify-content: space-between; padding: 0 15px 0 7px; }
.playback svg { width: 12px; height: 12px; }
.features { display: flex; flex: 1; padding-top: 9px; }
.features button { width: 20px; height: 25px; align-items: flex-start; padding-top: 3px; border-bottom: 2px solid #cfcfcf; background: linear-gradient(#bbb, #bbb) 50% 100% / 1px 4px no-repeat; }
.features button:first-child { border-image: linear-gradient(90deg, transparent 50%, #cfcfcf 50%) 2; }
.features button:nth-last-of-type(1) { border-image: linear-gradient(90deg, #cfcfcf 50%, transparent 50%) 2; }
.features button svg { width: 15px; height: 15px; }
.features .picked { background: linear-gradient(#6fc0e6, #6fc0e6) 50% 0 / 20px 20px no-repeat; }
.features .marker { width: 10px; height: 28px; margin: -2px 0 0 -4px; }
.settings { width: 34px; height: 40px; }
```
